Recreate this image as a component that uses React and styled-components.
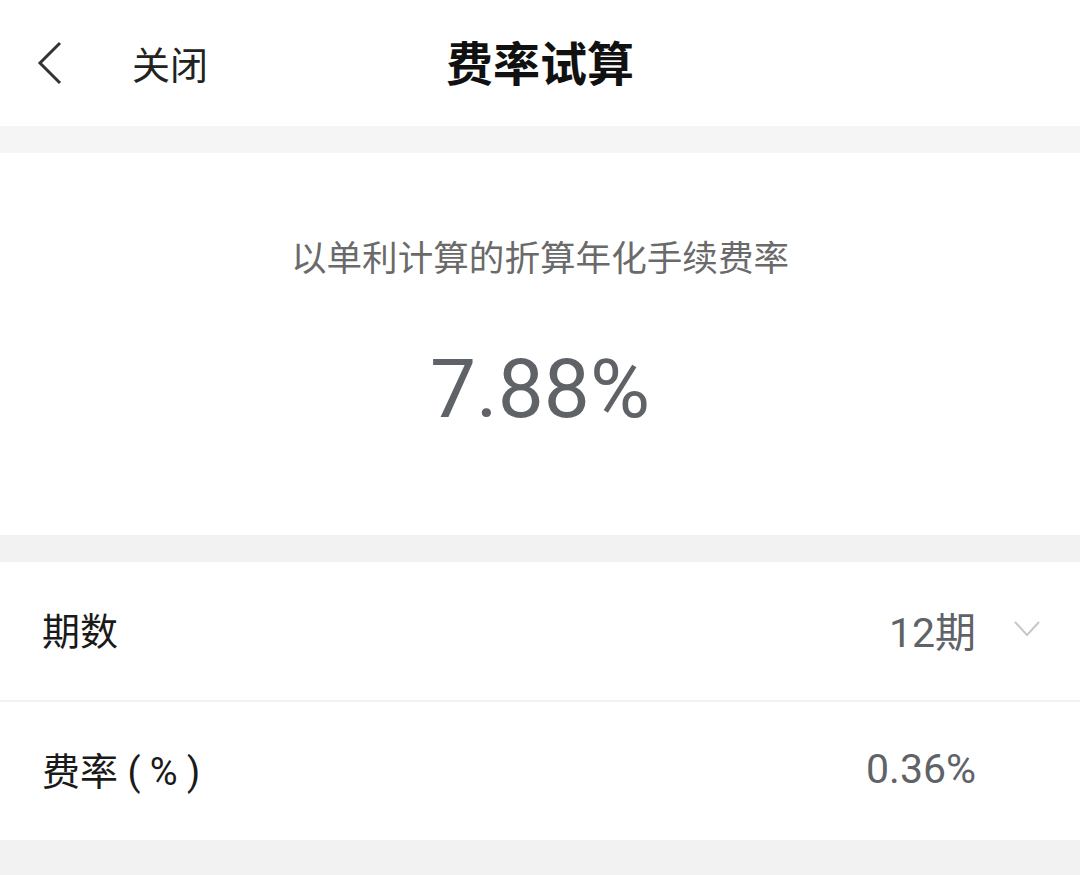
import React from 'react';
import styled, { createGlobalStyle } from 'styled-components';

const GlobalStyle = createGlobalStyle`
  body {
    margin: 0;
    background: #f2f2f2;
    font-family: Roboto, "Noto Sans CJK SC", sans-serif;
  }
`;

const Page = styled.div`
  width: 1080px;
  min-height: 875px;
  background: #f2f2f2;
  display: flex;
  flex-direction: column;
`;

const Header = styled.header`
  height: 121px;
  padding-bottom: 5px;
  background: #fff;
  display: grid;
  grid-template-columns: 1fr auto 1fr;
  align-items: center;
  border-bottom: 27px solid #f5f5f5;
`;

const HeaderLeft = styled.div`
  display: flex;
  align-items: center;
  padding: 4px 0 0 36px;
  gap: 68px;
`;

const BackButton = styled.button`
  border: 0;
  background: none;
  padding: 0;
  display: flex;
  cursor: pointer;
`;

const CloseText = styled.span`
  font-size: 38px;
  color: #222;
`;

const Title = styled.h1`
  margin: 0;
  font-size: 47px;
  font-weight: 700;
  color: #111;
`;

const Summary = styled.section`
  background: #fff;
  height: 382px;
  display: flex;
  flex-direction: column;
  align-items: center;
  padding-top: 82px;
  box-sizing: border-box;
  margin-bottom: 27px;
`;

const SummaryLabel = styled.div`
  font-size: 35.6px;
  color: #6a6a6a;
  line-height: 48px;
`;

const BigRate = styled.div`
  margin-top: 56px;
  font-size: 82px;
  color: #5f6368;
  line-height: 100px;
`;

const List = styled.section`
  background: #fff;
`;

const Row = styled.div`
  height: 133px;
  display: flex;
  align-items: center;
  padding: 0 40px 5px 42px;
  border-top: ${p => (p.$divider ? '2px solid #f2f2f2' : 'none')};
`;

const RowLabel = styled.span`
  font-size: 38px;
  color: #1a1a1a;
  flex: 1;
`;

const RowValue = styled.span`
  font-size: 41px;
  color: #5f6368;
  margin-right: ${p => (p.$withArrow ? '0' : '64px')};
`;

const Arrow = styled.span`
  display: flex;
  margin-left: 38px;
`;

export default function App() {
  return (
    <>
      <GlobalStyle />
      <Page>
        <Header>
          <HeaderLeft>
            <BackButton>
              <svg width="28" height="46" viewBox="0 0 28 46">
                <path d="M24 3 L4 23 L24 43" fill="none" stroke="#333" strokeWidth="3" />
              </svg>
            </BackButton>
            <CloseText>关闭</CloseText>
          </HeaderLeft>
          <Title>费率试算</Title>
          <div />
        </Header>
        <Summary>
          <SummaryLabel>以单利计算的折算年化手续费率</SummaryLabel>
          <BigRate>7.88%</BigRate>
        </Summary>
        <List>
          <Row>
            <RowLabel>期数</RowLabel>
            <RowValue $withArrow>12期</RowValue>
            <Arrow>
              <svg width="26" height="18" viewBox="0 0 26 18">
                <path d="M1 2 L13 15 L25 2" fill="none" stroke="#c4c8cc" strokeWidth="2" />
              </svg>
            </Arrow>
          </Row>
          <Row $divider>
            <RowLabel>费率 ( % )</RowLabel>
            <RowValue>0.36%</RowValue>
          </Row>
        </List>
      </Page>
    </>
  );
}
